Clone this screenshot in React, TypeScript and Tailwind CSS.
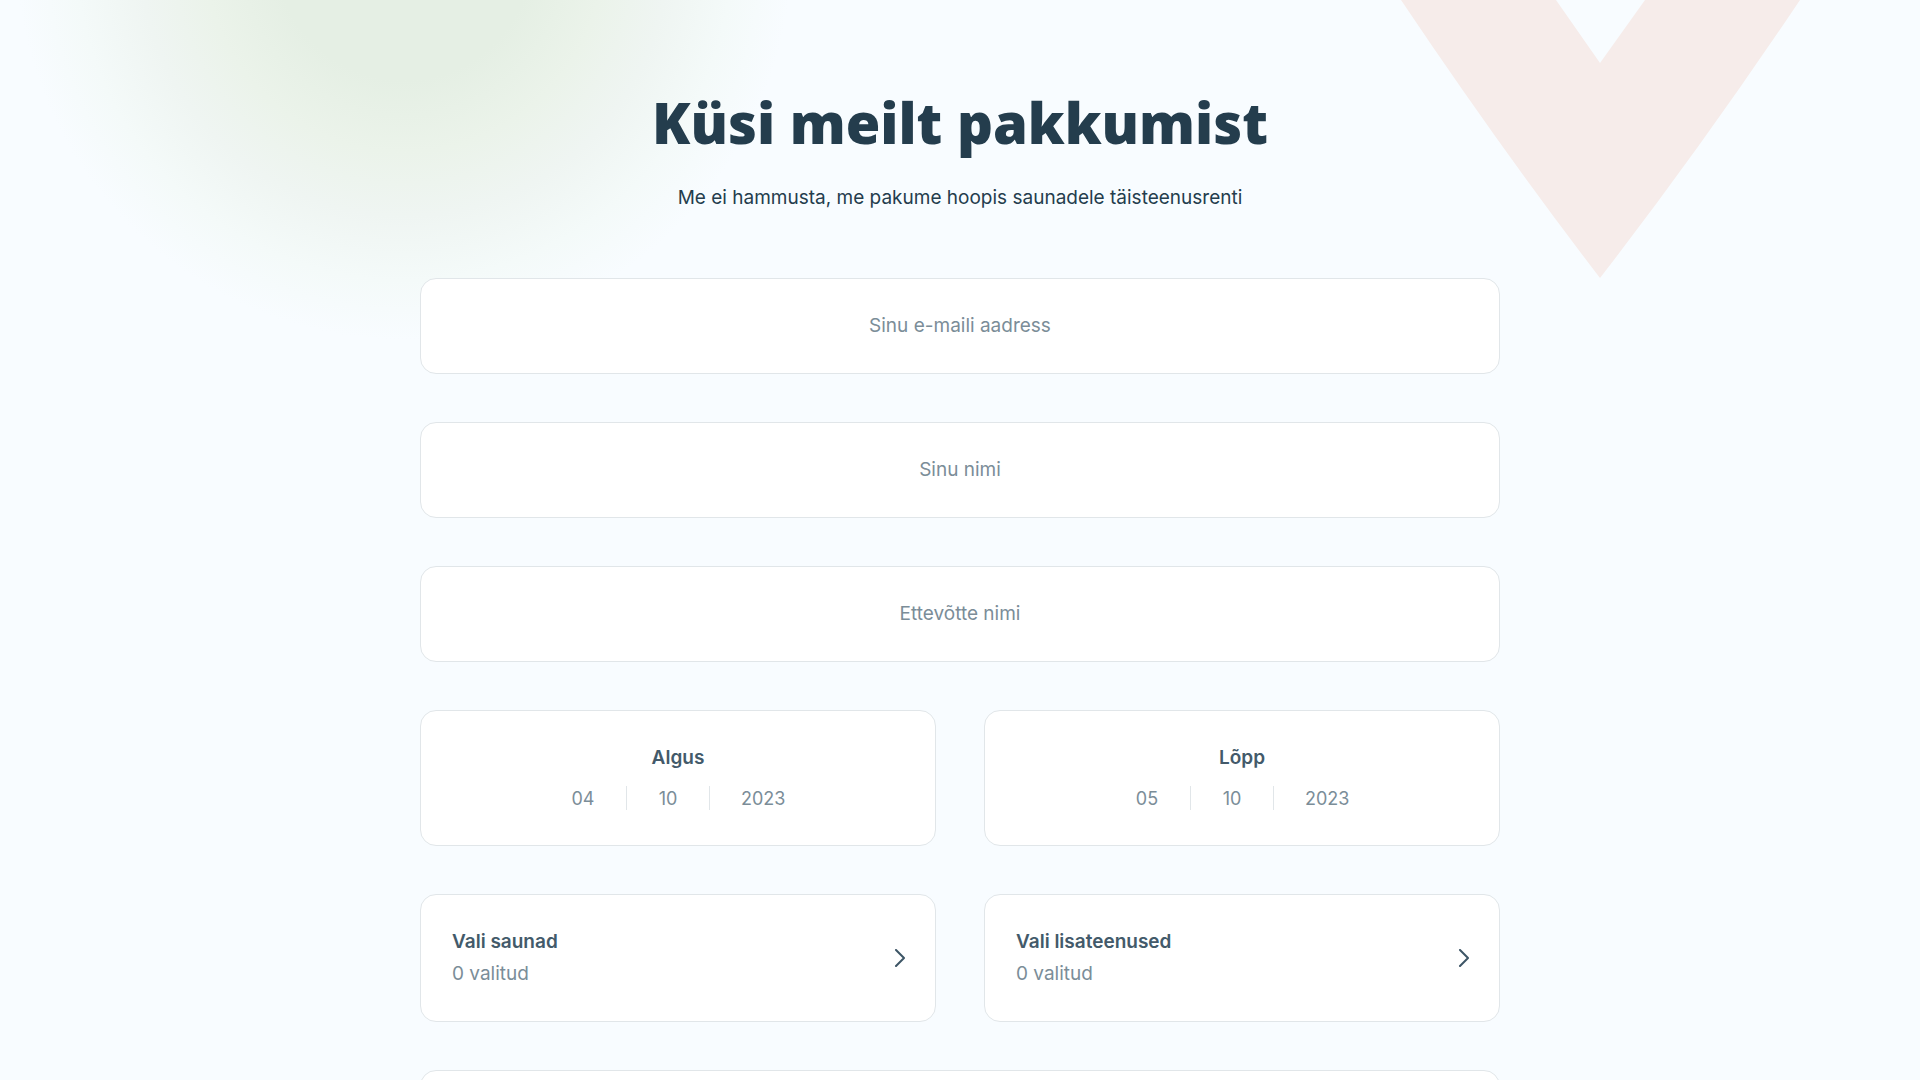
import React, { useState } from 'react';

interface TextFieldProps {
    id: string;
    type: 'text' | 'email';
    placeholder: string;
}

interface DateFieldProps {
    id: string;
    label: string;
    date: string[];
}

interface PickerProps {
    label: string;
    count: number;
}

const TextField = ({ id, type, placeholder }: TextFieldProps) => {
    const [value, setValue] = useState('');

    return (
        <input
            id={id}
            type={type}
            aria-label={placeholder}
            placeholder={placeholder}
            value={value}
            onChange={(e) => setValue(e.target.value)}
            className="block h-24 w-full rounded-2xl border border-[#e1e6e9] bg-white px-8 pb-px text-center placeholder:text-[#7b8d98]"
        />
    );
}

const Divider = () => <span className="h-6 w-px bg-[#e1e6e9]" />;

const DateField = ({ id, label, date }: DateFieldProps) => {
    const [day, month, year] = date;

    return (
        <div className="flex h-[136px] flex-col items-center justify-center gap-2 rounded-2xl border border-[#e1e6e9] bg-white">
            <label htmlFor={id} className="font-semibold leading-8 text-[#435a6a]">{label}</label>
            <div className="flex h-8 items-center gap-[31px] text-[18px] text-[#7b8d98]">
                <input id={id} aria-label={label + ' päev'} className="w-6 text-center" defaultValue={day} />
                <Divider />
                <input aria-label={label + ' kuu'} className="w-5 text-center" defaultValue={month} />
                <Divider />
                <input aria-label={label + ' aasta'} className="w-11 text-center" defaultValue={year} />
            </div>
        </div>
    );
}

const Picker = ({ label, count }: PickerProps) => (
    <button type="button" className="flex h-32 cursor-pointer items-center justify-between rounded-2xl border border-[#e1e6e9] bg-white pr-[30px] pl-[31px] text-left leading-8">
        <span>
            <span className="block font-semibold text-[#435a6a]">{label}</span>
            <span className="block text-[#7b8d98]">{count} valitud</span>
        </span>
        <svg viewBox="0 0 11 18" fill="none" className="h-[18px] w-[11px]" aria-hidden="true">
            <path d="M2 1l8 8-8 8" stroke="#3d5566" strokeWidth="2" strokeLinecap="round" strokeLinejoin="round" />
        </svg>
    </button>
);

// Green glow on the left, pink chevron hanging from the top on the right
const Background = () => (
    <div className="pointer-events-none absolute inset-0 overflow-hidden" aria-hidden="true">
        <div className="absolute -top-[448px] left-1 size-[800px] rounded-full bg-[radial-gradient(closest-side,#e5efe4_0%,#e5efe4_32%,#ebf3ea_50%,#eff5f2_66%,#f4faf9_82%,#f8fcff_97%)]" />
        <svg viewBox="0 0 400 278" className="absolute top-0 right-[119px] h-[278px] w-[400px]">
            <path d="M0 0Q100 149 199 278Q299 149 399 0H244L199 63L155 0Z" fill="#f6ecea" />
        </svg>
    </div>
);

const App = () => {
    return (
        <div className="relative min-h-screen bg-[#f8fcff] font-['Inter',sans-serif] text-[19px] text-[#243d4d]">
            <Background />
            <main className="relative mx-auto max-w-[1128px] px-6 pt-[78px] pb-20">
                <h1 className="text-center font-['Open_Sans',sans-serif] text-[56px] font-extrabold leading-[88px]">Küsi meilt pakkumist</h1>
                <p className="mt-4 text-center leading-8">Me ei hammusta, me pakume hoopis saunadele täisteenusrenti</p>
                <form className="mt-16 flex flex-col gap-12">
                    <TextField id="email" type="email" placeholder="Sinu e-maili aadress" />
                    <TextField id="name" type="text" placeholder="Sinu nimi" />
                    <TextField id="company" type="text" placeholder="Ettevõtte nimi" />
                    <div className="grid grid-cols-2 gap-12">
                        <DateField id="start" label="Algus" date={['04', '10', '2023']} />
                        <DateField id="end" label="Lõpp" date={['05', '10', '2023']} />
                    </div>
                    <div className="grid grid-cols-2 gap-12">
                        <Picker label="Vali saunad" count={0} />
                        <Picker label="Vali lisateenused" count={0} />
                    </div>
                    <textarea aria-label="Lisainfo" className="block h-48 w-full resize-none rounded-2xl border border-[#e1e6e9] bg-white p-8" />
                </form>
            </main>
        </div>
    );
}

export default App;
